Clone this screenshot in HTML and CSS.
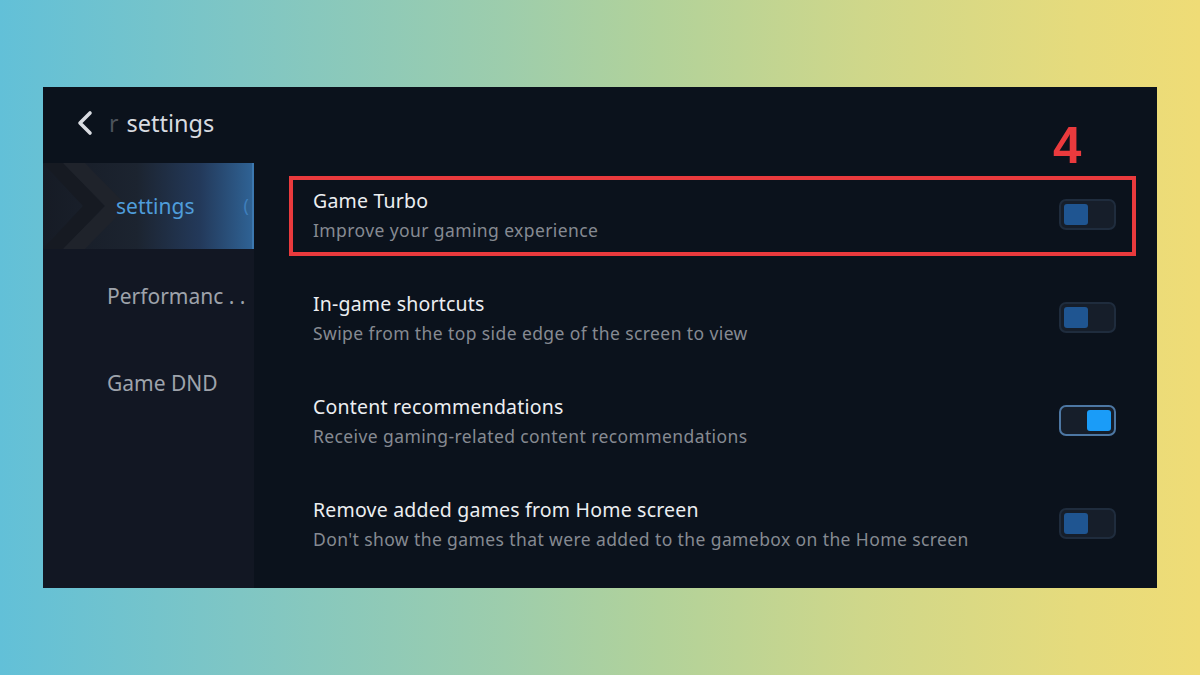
FILE: index.html
```html
<!doctype html>
<html>
  <head>
    <meta charset="utf-8">
    <title>Game settings</title>
    <link rel="stylesheet" href="styles.css">
  </head>
  <body>
    <div class="stage">
      <div class="panel">
        <header class="topbar">
          <svg class="back" width="18" height="26" viewBox="0 0 18 26"><path d="M14 3 L4 13 L14 23" fill="none" stroke="#d9dce1" stroke-width="3.6" stroke-linecap="round" stroke-linejoin="round"/></svg>
          <span class="title-fade">r</span>
          <span class="title">settings</span>
        </header>
        <div class="body">
          <nav class="sidebar">
            <div class="nav-item active">
              <svg class="nav-arrow" width="90" height="86" viewBox="0 0 90 86"><path d="M0 0 H20 L62 43 L20 86 H0 L40 43 Z" fill="#161a22"/><path d="M20 0 H42 L84 43 L42 86 H20 L62 43 Z" fill="#1f232b"/></svg>
              <span class="nav-label">settings</span>
              <span class="nav-cut">(</span>
            </div>
            <div class="nav-item"><span class="nav-label">Performanc . .</span></div>
            <div class="nav-item"><span class="nav-label">Game DND</span></div>
          </nav>
          <main class="list">
            <div class="row">
              <div class="texts">
                <div class="row-title">Game Turbo</div>
                <div class="row-sub">Improve your gaming experience</div>
              </div>
              <div class="toggle"><span class="knob"></span></div>
            </div>
            <div class="row">
              <div class="texts">
                <div class="row-title">In-game shortcuts</div>
                <div class="row-sub">Swipe from the top side edge of the screen to view</div>
              </div>
              <div class="toggle"><span class="knob"></span></div>
            </div>
            <div class="row">
              <div class="texts">
                <div class="row-title">Content recommendations</div>
                <div class="row-sub">Receive gaming-related content recommendations</div>
              </div>
              <div class="toggle on"><span class="knob"></span></div>
            </div>
            <div class="row">
              <div class="texts">
                <div class="row-title">Remove added games from Home screen</div>
                <div class="row-sub">Don't show the games that were added to the gamebox on the Home screen</div>
              </div>
              <div class="toggle"><span class="knob"></span></div>
            </div>
            <div class="mark-box"></div>
            <div class="mark-num">4</div>
          </main>
        </div>
      </div>
    </div>
  </body>
</html>
```

FILE: styles.css
```css
* {
  margin: 0;
  padding: 0;
  box-sizing: border-box;
}

html,
body {
  width: 1200px;
  height: 675px;
  overflow: hidden;
}

body {
  font-family: "Noto Sans", "Open Sans", sans-serif;
}

.stage {
  width: 1200px;
  height: 675px;
  padding: 87px 43px 0 43px;
  background: linear-gradient(90deg, #62c0d8 0%, #7fc6c4 20%, #9dcdac 42%, #b2d29a 55%, #cfd78a 72%, #e6db7c 90%, #efdc76 100%);
}

.panel {
  width: 1114px;
  height: 501px;
  background: #0b121c;
  display: flex;
  flex-direction: column;
}

/* header */
.topbar {
  height: 76px;
  display: flex;
  align-items: center;
  padding-left: 33px;
  padding-bottom: 4px;
}

.back {
  margin-right: 15px;
}

.title-fade {
  font-size: 23px;
  color: #4c525b;
  margin-right: 8px;
}

.title {
  font-size: 23.5px;
  color: #d8dbe0;
}

/* body */
.body {
  flex: 1;
  display: flex;
}

.sidebar {
  width: 211px;
  background: #121723;
}

.nav-item {
  position: relative;
  height: 87px;
  display: flex;
  align-items: center;
  padding-left: 64px;
  padding-top: 6px;
}

.nav-label {
  font-size: 21px;
  color: #9ea3ab;
  position: relative;
}

.nav-item.active {
  height: 86px;
  padding-left: 73px;
  padding-top: 0;
  background: linear-gradient(90deg, #161b25 0%, #1c2430 45%, #23395a 75%, #2f6294 100%);
  border-right: 2px solid #3c78b0;
}

.nav-item.active .nav-label {
  color: #4f9ddb;
}

.nav-arrow {
  position: absolute;
  left: 0;
  top: 0;
}

.nav-cut {
  position: absolute;
  right: 3px;
  top: 30px;
  font-size: 18px;
  color: #3f7fbc;
}

/* list */
.list {
  position: relative;
  flex: 1;
  padding: 0 41px 0 59px;
}

.row {
  height: 103px;
  display: flex;
  align-items: center;
  justify-content: space-between;
}

.texts {
  display: flex;
  flex-direction: column;
  gap: 5px;
  padding-top: 1px;
}

.row-title {
  font-size: 19.5px;
  letter-spacing: 0.2px;
  line-height: 25px;
  color: #eceef1;
}

.row-sub {
  font-size: 17.5px;
  letter-spacing: 0.4px;
  line-height: 24px;
  color: #868a92;
}

.toggle {
  width: 57px;
  height: 31px;
  border-radius: 7px;
  border: 2px solid #1f2c3d;
  background: #161e2a;
  padding: 3px;
  display: flex;
}

.knob {
  width: 24px;
  height: 21px;
  border-radius: 3px;
  background: #1f5591;
}

.toggle.on {
  border-color: #4d77a3;
  justify-content: flex-end;
}

.toggle.on .knob {
  background: #1a9cf8;
}

/* annotation */
.mark-box {
  position: absolute;
  left: 35px;
  top: 13px;
  width: 847px;
  height: 80px;
  border: 4px solid #ea3a3d;
}

.mark-num {
  position: absolute;
  left: 799px;
  top: -45px;
  font-family: "Liberation Sans", Arial, sans-serif;
  font-weight: bold;
  font-size: 51px;
  line-height: 56px;
  color: #ea3a3d;
}
```
